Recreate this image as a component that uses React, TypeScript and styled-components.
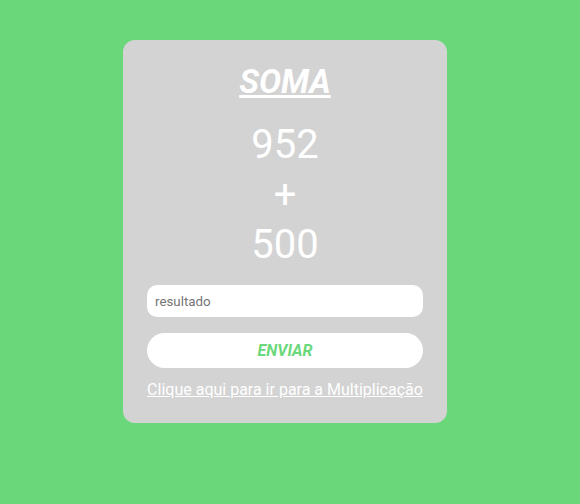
import React from "react";
import styled, { createGlobalStyle } from "styled-components";

const Global = createGlobalStyle`
  html, body { margin: 0; padding: 0; }
  body {
    background: #6ad87a;
    font-family: Roboto, "Noto Sans", sans-serif;
    width: 580px;
    height: 504px;
    overflow: hidden;
  }
`;

const Page = styled.div`
  padding: 40px 0 0 123px;
`;

const Card = styled.div`
  width: 324px;
  height: 383px;
  box-sizing: border-box;
  background: #d3d3d3;
  border-radius: 12px;
  padding: 22px 24px 0;
  display: flex;
  flex-direction: column;
  align-items: center;
  color: #ffffff;
`;

const Title = styled.h1`
  margin: 0;
  font-size: 33px;
  font-weight: 700;
  font-style: italic;
  text-decoration: underline;
  line-height: 40px;
`;

const Numbers = styled.div`
  margin-top: 18px;
  display: flex;
  flex-direction: column;
  align-items: center;
  font-size: 40px;
  line-height: 50px;
`;

const Input = styled.input`
  margin-top: 15px;
  width: 276px;
  height: 32px;
  box-sizing: border-box;
  border: none;
  border-radius: 10px;
  background: #ffffff;
  padding: 0 8px;
  font-family: Roboto, sans-serif;
  font-size: 13.33px;
  outline: none;
  &::placeholder { color: #757575; }
`;

const Button = styled.button`
  margin-top: 16px;
  width: 276px;
  height: 35px;
  border: none;
  border-radius: 18px;
  background: #ffffff;
  color: #6ad87a;
  font-family: Roboto, sans-serif;
  font-size: 16px;
  font-weight: 700;
  font-style: italic;
`;

const Link = styled.a`
  margin-top: 12px;
  color: #ffffff;
  font-size: 16px;
  text-decoration: underline;
  line-height: 19px;
`;

export default function App() {
  return (
    <>
      <Global />
      <Page>
        <Card>
          <Title>SOMA</Title>
          <Numbers>
            <span>952</span>
            <span>+</span>
            <span>500</span>
          </Numbers>
          <Input placeholder="resultado" />
          <Button>ENVIAR</Button>
          <Link href="#">Clique aqui para ir para a Multiplicação</Link>
        </Card>
      </Page>
    </>
  );
}
